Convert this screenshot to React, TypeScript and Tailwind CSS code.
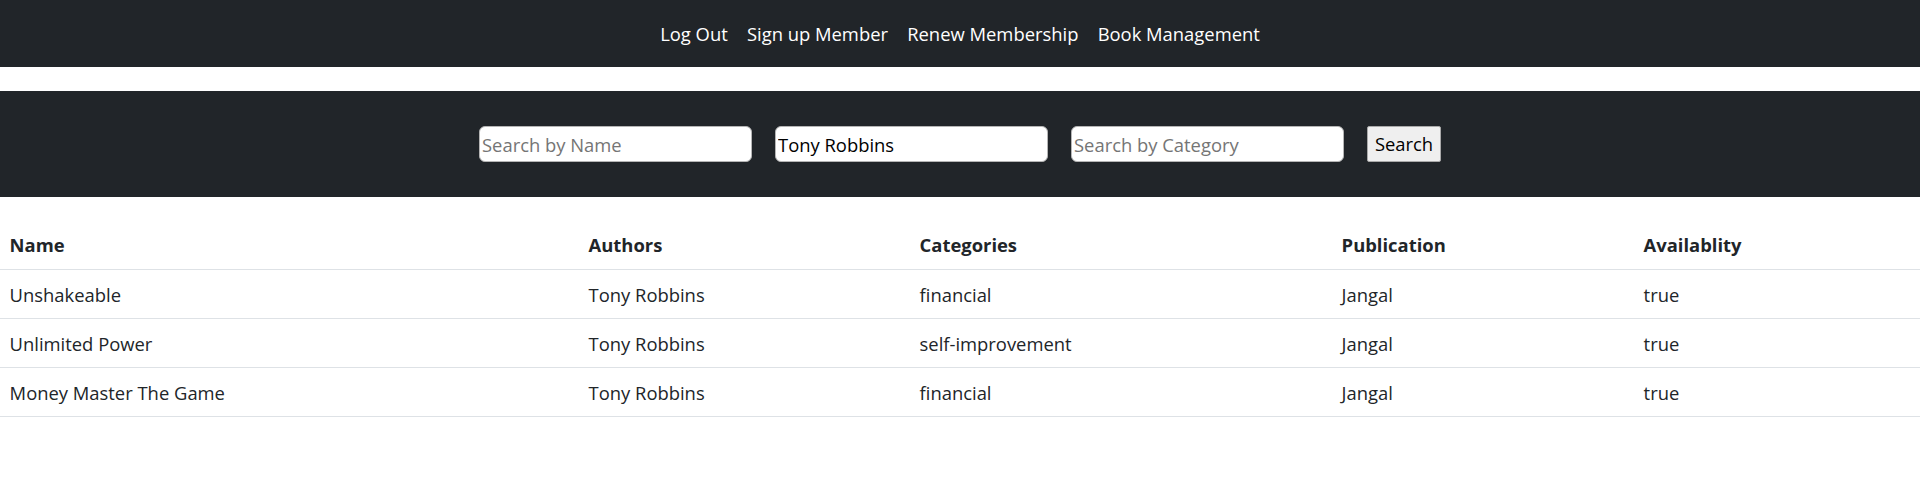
import { useState } from 'react';

const books = [
  { name: 'Unshakeable', author: 'Tony Robbins', category: 'financial', publication: 'Jangal', available: true },
  { name: 'Unlimited Power', author: 'Tony Robbins', category: 'self-improvement', publication: 'Jangal', available: true },
  { name: 'Money Master The Game', author: 'Tony Robbins', category: 'financial', publication: 'Jangal', available: true },
];

export default function App() {
  const [name, setName] = useState('');
  const [author, setAuthor] = useState('Tony Robbins');
  const [category, setCategory] = useState('');

  return (
    <div className="min-h-screen bg-white text-[#212529] font-['Open_Sans',sans-serif] text-[18.4px] leading-[28.8px]">
      {/* Navbar */}
      <nav className="bg-[#212529] h-[67px] flex items-center justify-center pt-[2px]">
        <a className="px-[9.6px] text-white cursor-pointer">Log Out</a>
        <a className="px-[9.6px] text-white cursor-pointer">Sign up Member</a>
        <a className="px-[9.6px] text-white cursor-pointer">Renew Membership</a>
        <a className="px-[9.6px] text-white cursor-pointer">Book Management</a>
      </nav>

      {/* Search */}
      <div className="mt-[24px] bg-[#212529] h-[106px] flex items-center justify-center gap-[23px]">
        <input
          className="w-[273px] h-[36px] bg-white rounded-[6px] border border-[#b5b5b5] px-[2px] text-[18.4px] text-black placeholder:text-[#757575] outline-none"
          placeholder="Search by Name"
          value={name}
          onChange={e => setName(e.target.value)}
        />
        <input
          className="w-[273px] h-[36px] bg-white rounded-[6px] border border-[#b5b5b5] px-[2px] text-[18.4px] text-black placeholder:text-[#757575] outline-none"
          placeholder="Search by Author"
          value={author}
          onChange={e => setAuthor(e.target.value)}
        />
        <input
          className="w-[273px] h-[36px] bg-white rounded-[6px] border border-[#b5b5b5] px-[2px] text-[18.4px] text-black placeholder:text-[#757575] outline-none"
          placeholder="Search by Category"
          value={category}
          onChange={e => setCategory(e.target.value)}
        />
        <button className="w-[74px] h-[36px] bg-[#efefef] border border-[#a9a9a9] rounded-[2px] text-[18.4px] text-black">
          Search
        </button>
      </div>

      {/* Table */}
      <table className="mt-[24px] w-full border-collapse text-left">
        <thead>
          <tr className="border-b border-[#dee2e6]">
            <th className="w-[579px] px-[9.6px] py-[9.6px] font-bold">Name</th>
            <th className="w-[331px] px-[9.6px] py-[9.6px] font-bold">Authors</th>
            <th className="w-[422px] px-[9.6px] py-[9.6px] font-bold">Categories</th>
            <th className="w-[302px] px-[9.6px] py-[9.6px] font-bold">Publication</th>
            <th className="px-[9.6px] py-[9.6px] font-bold">Availablity</th>
          </tr>
        </thead>
        <tbody>
          {books.map(b => (
            <tr key={b.name} className="border-b border-[#dee2e6]">
              <td className="px-[9.6px] pt-[10.6px] pb-[8.6px]">{b.name}</td>
              <td className="px-[9.6px] pt-[10.6px] pb-[8.6px]">{b.author}</td>
              <td className="px-[9.6px] pt-[10.6px] pb-[8.6px]">{b.category}</td>
              <td className="px-[9.6px] pt-[10.6px] pb-[8.6px]">{b.publication}</td>
              <td className="px-[9.6px] pt-[10.6px] pb-[8.6px]">{String(b.available)}</td>
            </tr>
          ))}
        </tbody>
      </table>
    </div>
  );
}
